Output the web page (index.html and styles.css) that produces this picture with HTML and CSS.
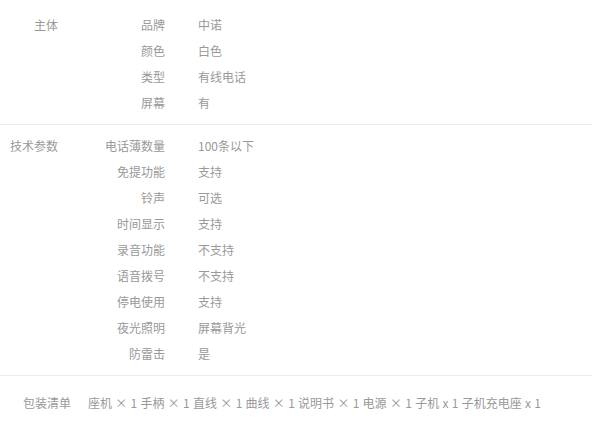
FILE: index.html
```html
<!DOCTYPE html>
<html lang="zh-CN">
<head>
<meta charset="utf-8">
<link rel="stylesheet" href="styles.css">
</head>
<body>
<div class="specs">
  <section class="group first">
    <div class="group-name">主体</div>
    <dl class="items">
      <div class="item"><dt>品牌</dt><dd>中诺</dd></div>
      <div class="item"><dt>颜色</dt><dd>白色</dd></div>
      <div class="item"><dt>类型</dt><dd>有线电话</dd></div>
      <div class="item"><dt>屏幕</dt><dd>有</dd></div>
    </dl>
  </section>
  <section class="group">
    <div class="group-name">技术参数</div>
    <dl class="items">
      <div class="item"><dt>电话薄数量</dt><dd>100条以下</dd></div>
      <div class="item"><dt>免提功能</dt><dd>支持</dd></div>
      <div class="item"><dt>铃声</dt><dd>可选</dd></div>
      <div class="item"><dt>时间显示</dt><dd>支持</dd></div>
      <div class="item"><dt>录音功能</dt><dd>不支持</dd></div>
      <div class="item"><dt>语音拨号</dt><dd>不支持</dd></div>
      <div class="item"><dt>停电使用</dt><dd>支持</dd></div>
      <div class="item"><dt>夜光照明</dt><dd>屏幕背光</dd></div>
      <div class="item"><dt>防雷击</dt><dd>是</dd></div>
    </dl>
  </section>
  <section class="package">
    <div class="package-name">包装清单</div>
    <div class="package-list">座机 × 1 手柄 × 1 直线 × 1 曲线 × 1 说明书 × 1 电源 × 1 子机 x 1 子机充电座 x 1</div>
  </section>
</div>
</body>
</html>
```

FILE: styles.css
```css
html, body {
  margin: 0;
  padding: 0;
  background: #fff;
}
body {
  font-family: "Noto Sans CJK SC", "Microsoft YaHei", sans-serif;
  font-size: 12px;
  color: #999;
}
.group {
  display: flex;
  padding: 8px 0;
  border-bottom: 1px solid #eaeaea;
  line-height: 26px;
}
.group.first {
  padding-top: 12px;
}
.group-name {
  width: 58px;
  text-align: right;
  flex: none;
}
.items {
  margin: 0;
  display: flex;
  flex-direction: column;
}
.item {
  display: flex;
}
.item dt {
  width: 107px;
  text-align: right;
}
.item dd {
  margin: 0 0 0 33px;
}
.package {
  display: flex;
  padding-top: 14px;
  line-height: 26px;
}
.package-name {
  width: 71px;
  text-align: right;
  flex: none;
}
.package-list {
  margin-left: 17px;
  word-spacing: 0.6px;
}
```
